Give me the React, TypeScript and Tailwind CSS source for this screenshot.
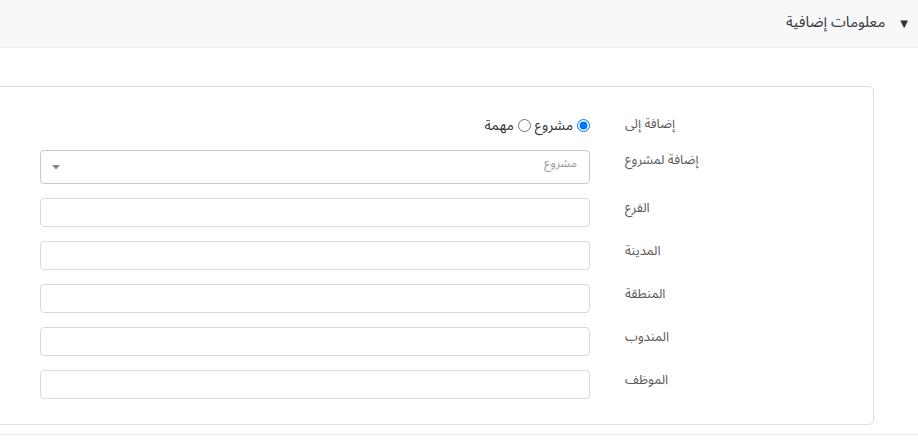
import React from 'react';

function App() {
  const fields = ['الفرع', 'المدينة', 'المنطقة', 'المندوب', 'الموظف'];

  return (
    <div
      dir="rtl"
      className="min-h-screen bg-white overflow-hidden text-[#444] font-['Noto_Sans_Arabic','DejaVu_Sans',sans-serif]"
    >
      {/* Collapsible header */}
      <div className="h-12 bg-[#f7f8fa] border-b border-[#eef0f2] flex items-center gap-[15px] pr-[10px]">
        <span className="text-[10px] text-[#333] leading-none">▼</span>
        <span className="text-[15px] text-[#3a3a3a] leading-none -mt-[2px]">معلومات إضافية</span>
      </div>

      <div className="pt-[38px] pb-[9px] border-b border-[#eceef0]">
        <div className="mr-[44px] -ml-[10px] border border-[#dcdfe3] rounded-[5px] pt-[26px] pb-[25px]">
          {/* Add to */}
          <div className="flex h-[25px] items-center">
            <div className="w-[248px] text-left text-[13px] text-[#5a5a5a] -mt-[2px]">إضافة إلى</div>
            <div className="mr-[35px] w-[550px] flex items-center gap-[4px] text-[14px] text-[#333]">
              <input type="radio" name="target" defaultChecked className="m-0 w-[13px] h-[13px] accent-[#0075ff]" />
              <span>مشروع</span>
              <input type="radio" name="target" className="m-0 w-[13px] h-[13px]" />
              <span>مهمة</span>
            </div>
          </div>

          {/* Project select */}
          <div className="flex mt-[12px]">
            <div className="w-[248px] text-left text-[13px] leading-5 text-[#5a5a5a]">إضافة لمشروع</div>
            <div className="mr-[35px] w-[550px] h-[34px] border border-[#c8c8c8] rounded-[4px] flex justify-between pr-[12px] pl-[11px]">
              <span className="text-[12px] text-[#9a9a9a] pt-[4px]">مشروع</span>
              <svg width="8" height="5" viewBox="0 0 8 5" className="self-center">
                <path d="M0 0h8L4 4.5z" fill="#888" />
              </svg>
            </div>
          </div>

          {/* Text fields */}
          <div className="mt-[14px] flex flex-col gap-[14px]">
            {fields.map((f) => (
              <div key={f} className="flex">
                <div className="w-[248px] text-left text-[13px] leading-5 text-[#5a5a5a]">{f}</div>
                <input
                  type="text"
                  className="mr-[35px] w-[550px] h-[29px] border border-[#dadada] rounded-[4px] outline-none px-3 text-[13px]"
                />
              </div>
            ))}
          </div>
        </div>
      </div>
    </div>
  );
}

export default App;
